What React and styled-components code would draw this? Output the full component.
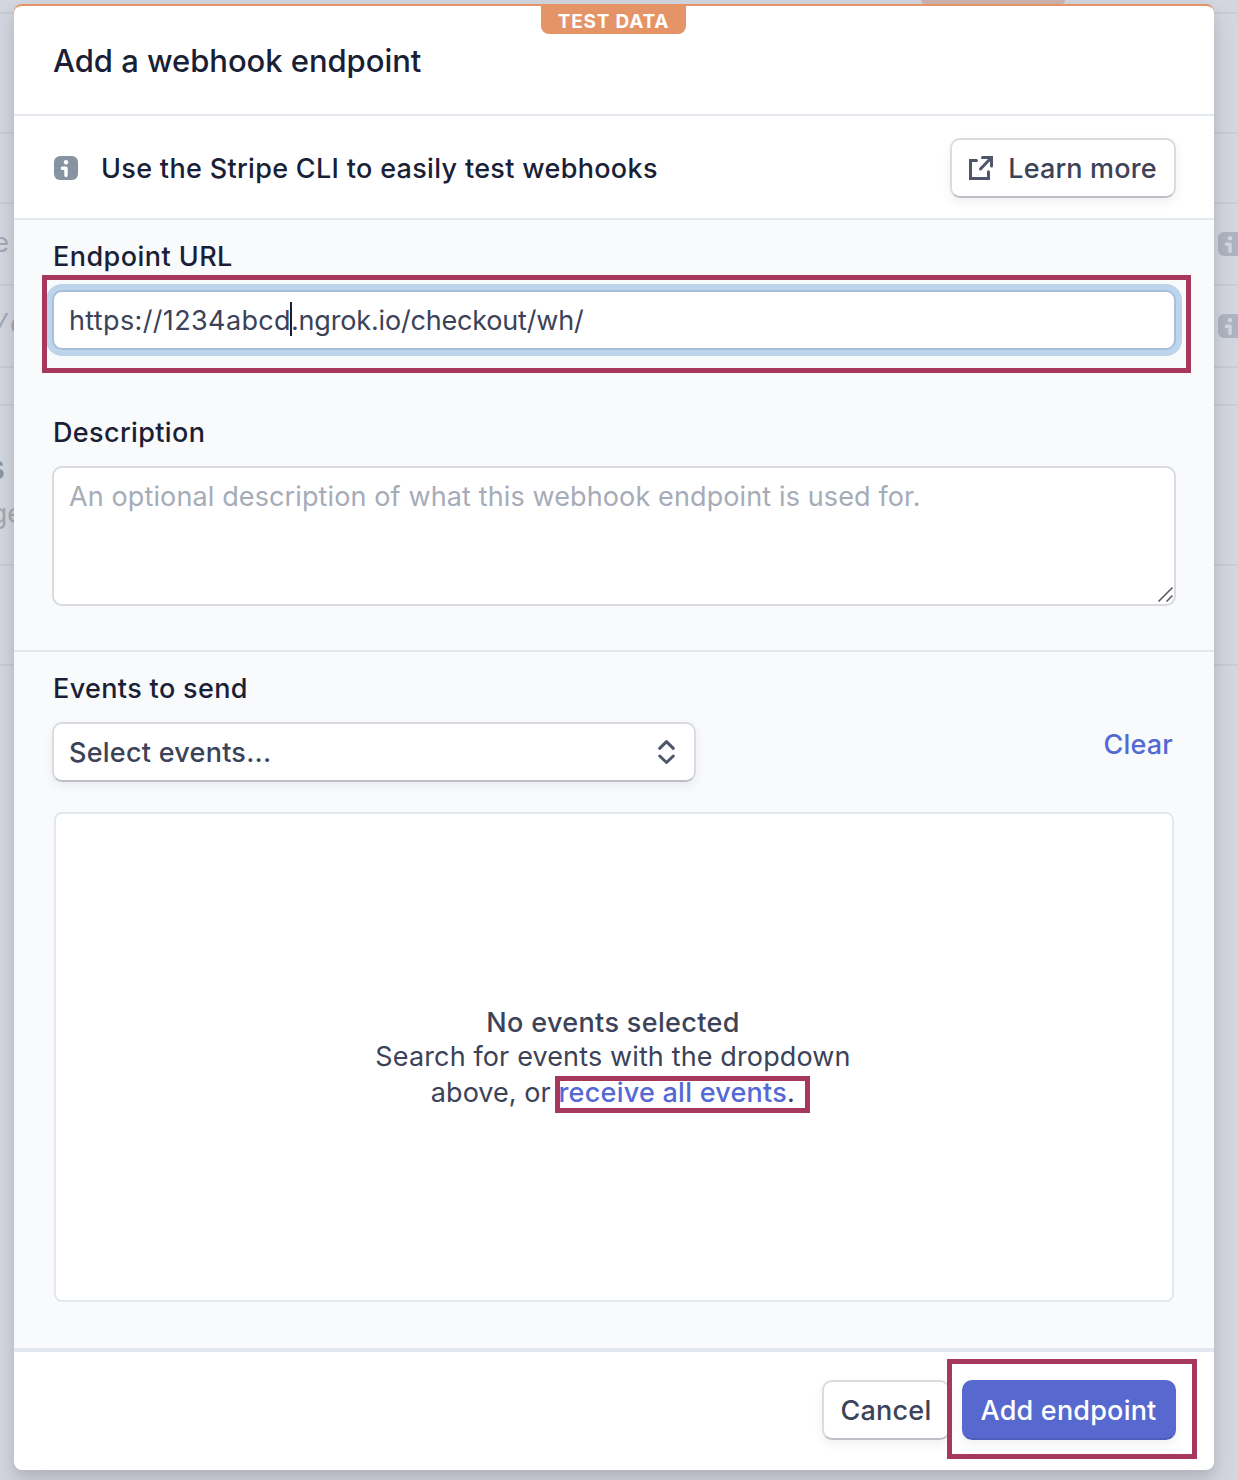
import React from "react";
import styled, { createGlobalStyle, css } from "styled-components";

const color = {
  heading: "#1a1f36",
  body: "#3c4257",
  placeholder: "#a5acb8",
  accent: "#5469d4",
  primary: "#5769ce",
  line: "#e3e8ee",
  panel: "#f8fafc",
  backdrop: "#d3d6de",
  orange: "#e59468",
  mark: "#a5385b",
};

const GlobalStyle = createGlobalStyle`
  *, *::before, *::after { box-sizing: border-box; }
  body {
    margin: 0;
    background: ${color.backdrop};
    font-family: Inter, "Liberation Sans", sans-serif;
    font-size: 27px;
    line-height: 36px;
    color: ${color.body};
    -webkit-font-smoothing: antialiased;
  }
`;

const Screen = styled.div`
  position: relative;
  width: 1238px;
  height: 1480px;
  overflow: hidden;
  background: ${color.backdrop};
`;

const PageRow = styled.div`
  display: flex;
  justify-content: space-between;
  height: ${(p) => p.$height}px;
  border-bottom: 2px solid #c8ccd4;
`;

const PageCell = styled.div`
  display: flex;
  flex-direction: column;
  align-items: flex-end;
  width: ${(p) => p.$width}px;
  padding-top: ${(p) => p.$top}px;
  white-space: nowrap;
`;

const PageText = styled.span`
  color: #a2a7b4;
  font-size: 27px;
  font-family: ${(p) => (p.$mono ? '"Liberation Mono", monospace' : "inherit")};
  line-height: 36px;
`;

const PageHeading = styled(PageText)`
  margin: 0 18px 11px 0;
  color: #8e93a2;
  font-size: 36px;
  font-weight: 700;
`;

const PageIcon = styled.div`
  display: flex;
  width: 20px;
  padding-top: 28px;
  overflow: hidden;
`;

const PageTag = styled.div`
  width: 144px;
  height: 4px;
  margin-left: 921px;
  border-radius: 0 0 8px 8px;
  background: #ccb3ad;
`;

const Modal = styled.section`
  position: absolute;
  top: 4px;
  left: 14px;
  display: flex;
  flex-direction: column;
  width: 1200px;
  height: 1466px;
  border-top: 2px solid ${color.orange};
  border-radius: 8px;
  background: #fff;
  box-shadow: 0 12px 22px rgba(70, 80, 90, 0.14), 0 6px 12px rgba(0, 0, 0, 0.09);
`;

const TestTag = styled.div`
  position: absolute;
  top: 0;
  left: 527px;
  width: 145px;
  height: 28px;
  border-radius: 0 0 8px 8px;
  background: ${color.orange};
  color: #fff;
  font-size: 19px;
  font-weight: 700;
  line-height: 31px;
  letter-spacing: 0.8px;
  text-align: center;
  white-space: nowrap;
`;

const Header = styled.header`
  height: 110px;
  padding: 35px 40px 0 39px;
  border-bottom: 2px solid ${color.line};
`;

const Title = styled.h1`
  margin: 0;
  color: ${color.heading};
  font-size: 31px;
  font-weight: 500;
  line-height: 40px;
  letter-spacing: -0.05px;
`;

const Banner = styled.div`
  display: flex;
  align-items: center;
  height: 104px;
  padding: 2px 38px 0 40px;
  border-bottom: 2px solid ${color.line};
`;

const BannerText = styled.p`
  flex: 1;
  margin: 0 0 0 23px;
  padding-top: 2px;
  color: ${color.heading};
  font-weight: 500;
  letter-spacing: 0.32px;
`;

const Section = styled.div`
  height: ${(p) => p.$height}px;
  padding: 19px 38px 0;
  border-bottom: ${(p) => p.$rule}px solid ${color.line};
  background: ${color.panel};
`;

const Label = styled.div`
  padding-left: 1px;
  color: ${color.heading};
  font-weight: 500;
  letter-spacing: ${(p) => p.$track ?? 0.36}px;
`;

const fieldBox = css`
  border: 2px solid #d8dbe1;
  border-radius: 10px;
  background: #fff;
`;

const UrlWrap = styled.div`
  position: relative;
  margin: 15px 0 65px;
`;

const UrlField = styled.div`
  ${fieldBox}
  display: flex;
  align-items: center;
  height: 60px;
  padding: 2px 0 0 15px;
  border-color: #a6bfdc;
  box-shadow: 0 0 0 6px #bdd5eb;
  white-space: nowrap;
`;

const Caret = styled.span`
  width: 2px;
  height: 34px;
  margin: -4px -1px 0;
  background: ${color.heading};
`;

const Mark = styled.div`
  position: absolute;
  inset: ${(p) => p.$inset};
  border: 5px solid ${color.mark};
  pointer-events: none;
`;

const TextArea = styled.div`
  ${fieldBox}
  display: flex;
  justify-content: space-between;
  height: 140px;
  margin-top: 15px;
  padding: 11px 0 0 15px;
  color: ${color.placeholder};
`;

const Grip = styled.svg`
  align-self: flex-end;
  width: 17px;
  height: 17px;
  margin-bottom: 1px;
`;

const SelectRow = styled.div`
  display: flex;
  justify-content: space-between;
  margin-top: 15px;
`;

const raised = css`
  border: 2px solid #d9dbe1;
  border-bottom-color: #bcbfc6;
  border-radius: 10px;
  background: #fff;
  box-shadow: 0 4px 10px rgba(60, 66, 87, 0.08);
`;

const Select = styled.div`
  ${raised}
  display: flex;
  align-items: center;
  justify-content: space-between;
  width: 644px;
  height: 60px;
  padding: 2px 18px 0 15px;
  font-weight: 500;
  svg { margin-top: -2px; }
`;

const Clear = styled.a`
  margin: 5px 3px 0 0;
  color: ${color.accent};
  font-weight: 500;
  letter-spacing: 0.2px;
`;

const EmptyBox = styled.div`
  height: 490px;
  margin: 30px 2px 0;
  padding-top: 191px;
  border: 2px solid ${color.line};
  border-radius: 8px;
  background: #fff;
  text-align: center;
`;

const EmptyLine = styled.div`
  height: ${(p) => p.$height}px;
  padding-right: 2px;
  font-weight: ${(p) => (p.$strong ? 500 : 400)};
  line-height: 36px;
  white-space: nowrap;
`;

const MarkedLink = styled.span`
  position: relative;
  letter-spacing: 0.25px;
  a { color: ${color.accent}; font-weight: 500; }
`;

const Button = styled.button`
  ${raised}
  display: flex;
  align-items: center;
  justify-content: center;
  gap: 14px;
  width: ${(p) => p.$width}px;
  height: 60px;
  padding: 2px ${(p) => (p.$icon || p.$primary ? 1 : 0)}px 0 0;
  color: ${color.body};
  font: inherit;
  font-weight: 500;
  letter-spacing: 0.2px;
  white-space: nowrap;
  svg { margin-top: -2px; }
  ${(p) =>
    p.$primary &&
    css`
      border-color: ${color.primary};
      border-bottom-color: #4c5dbb;
      background: ${color.primary};
      color: #fff;
    `}
`;

const Footer = styled.footer`
  display: flex;
  justify-content: flex-end;
  gap: 12px;
  padding: 28px 38px 0;
`;

const ActionWrap = styled.div`
  position: relative;
`;

const Run = styled.span`
  letter-spacing: ${(p) => p.$track}px;
`;

const InfoIcon = ({ fill = "#8792a2", ink = "#fff" }) => (
  <svg width="24" height="24" viewBox="0 0 24 24" style={{ flex: "none" }}>
    <rect width="24" height="24" rx="6" fill={fill} />
    <circle cx="12" cy="6.2" r="2.2" fill={ink} />
    <path d="M8.4 12.2H12v7.4" fill="none" stroke={ink} strokeWidth="3.4" strokeLinecap="round" strokeLinejoin="round" />
  </svg>
);

const ExternalIcon = () => (
  <svg width="26" height="26" viewBox="0 0 26 26" fill="none" stroke="#4f566b" strokeWidth="3" strokeLinecap="round">
    <path d="M8.5 5.5H2.5v18h18v-6.8" />
    <path d="M14.5 2.5h9v8.5" />
    <path d="M23 3 12.5 14" />
  </svg>
);

const ChevronsIcon = () => (
  <svg width="18" height="26" viewBox="0 0 18 26" fill="none" stroke="#4f566b" strokeWidth="3" strokeLinecap="round" strokeLinejoin="round">
    <path d="M1.7 9.3 8.5 2.7 15.3 9.3M1.7 17 8.5 23.5 15.3 17" />
  </svg>
);

export default function App() {
  return (
    <>
      <GlobalStyle />
      <Screen>
        <PageRow $height={14}><PageTag /></PageRow>
        <PageRow $height={120} />
        <PageRow $height={70} />
        <PageRow $height={82}>
          <PageCell $width={9} $top={21}><PageText>e</PageText></PageCell>
          <PageIcon><InfoIcon fill="#aeb4bf" ink="#d3d6df" /></PageIcon>
        </PageRow>
        <PageRow $height={82}>
          <PageCell $width={26} $top={22}><PageText $mono>/c</PageText></PageCell>
          <PageIcon><InfoIcon fill="#aeb4bf" ink="#d3d6df" /></PageIcon>
        </PageRow>
        <PageRow $height={38} />
        <PageRow $height={160}>
          <PageCell $width={23} $top={43}>
            <PageHeading>s</PageHeading>
            <PageText>ge</PageText>
          </PageCell>
        </PageRow>
        <PageRow $height={100} />
        <Modal>
          <TestTag>TEST DATA</TestTag>
          <Header>
            <Title>Add a webhook endpoint</Title>
          </Header>
          <Banner>
            <InfoIcon />
            <BannerText>Use the Stripe CLI to easily test webhooks</BannerText>
            <Button $icon $width={226}>
              <ExternalIcon />
              <Run $track={0.15}>Learn more</Run>
            </Button>
          </Banner>
          <Section $height={432} $rule={2}>
            <Label $track={0.45}>Endpoint URL</Label>
            <UrlWrap>
              <UrlField>
                <Run $track={0.36}>https://1234abcd</Run>
                <Caret />
                <Run $track={-0.18}>.ngrok.io/checkout/wh/</Run>
              </UrlField>
              <Mark $inset="-15px -15px -23px -10px" />
            </UrlWrap>
            <Label>Description</Label>
            <TextArea>
              <Run $track={0.12}>An optional description of what this webhook endpoint is used for.</Run>
              <Grip viewBox="0 0 17 17" stroke="#5c5c5c" strokeWidth="1.6">
                <path d="M1.5 15.5 15.5 1.5M9.5 15.5 15.5 9.5" />
              </Grip>
            </TextArea>
          </Section>
          <Section $height={700} $rule={4}>
            <Label>Events to send</Label>
            <SelectRow>
              <Select>
                <Run $track={0.25}>Select events...</Run>
                <ChevronsIcon />
              </Select>
              <Clear>Clear</Clear>
            </SelectRow>
            <EmptyBox>
              <EmptyLine $height={34} $strong><Run $track={0.34}>No events selected</Run></EmptyLine>
              <EmptyLine $height={36}><Run $track={0.13}>Search for events with the dropdown</Run></EmptyLine>
              <EmptyLine $height={36}>
                <Run $track={0.05}>above, or </Run>
                <MarkedLink>
                  <a>receive all events</a>.
                  <Mark $inset="0 -15px -4px -3px" />
                </MarkedLink>
              </EmptyLine>
            </EmptyBox>
          </Section>
          <Footer>
            <Button $width={128}>Cancel</Button>
            <ActionWrap>
              <Button $primary $width={214}>Add endpoint</Button>
              <Mark $inset="-21px -21px -19px -15px" />
            </ActionWrap>
          </Footer>
        </Modal>
      </Screen>
    </>
  );
}
